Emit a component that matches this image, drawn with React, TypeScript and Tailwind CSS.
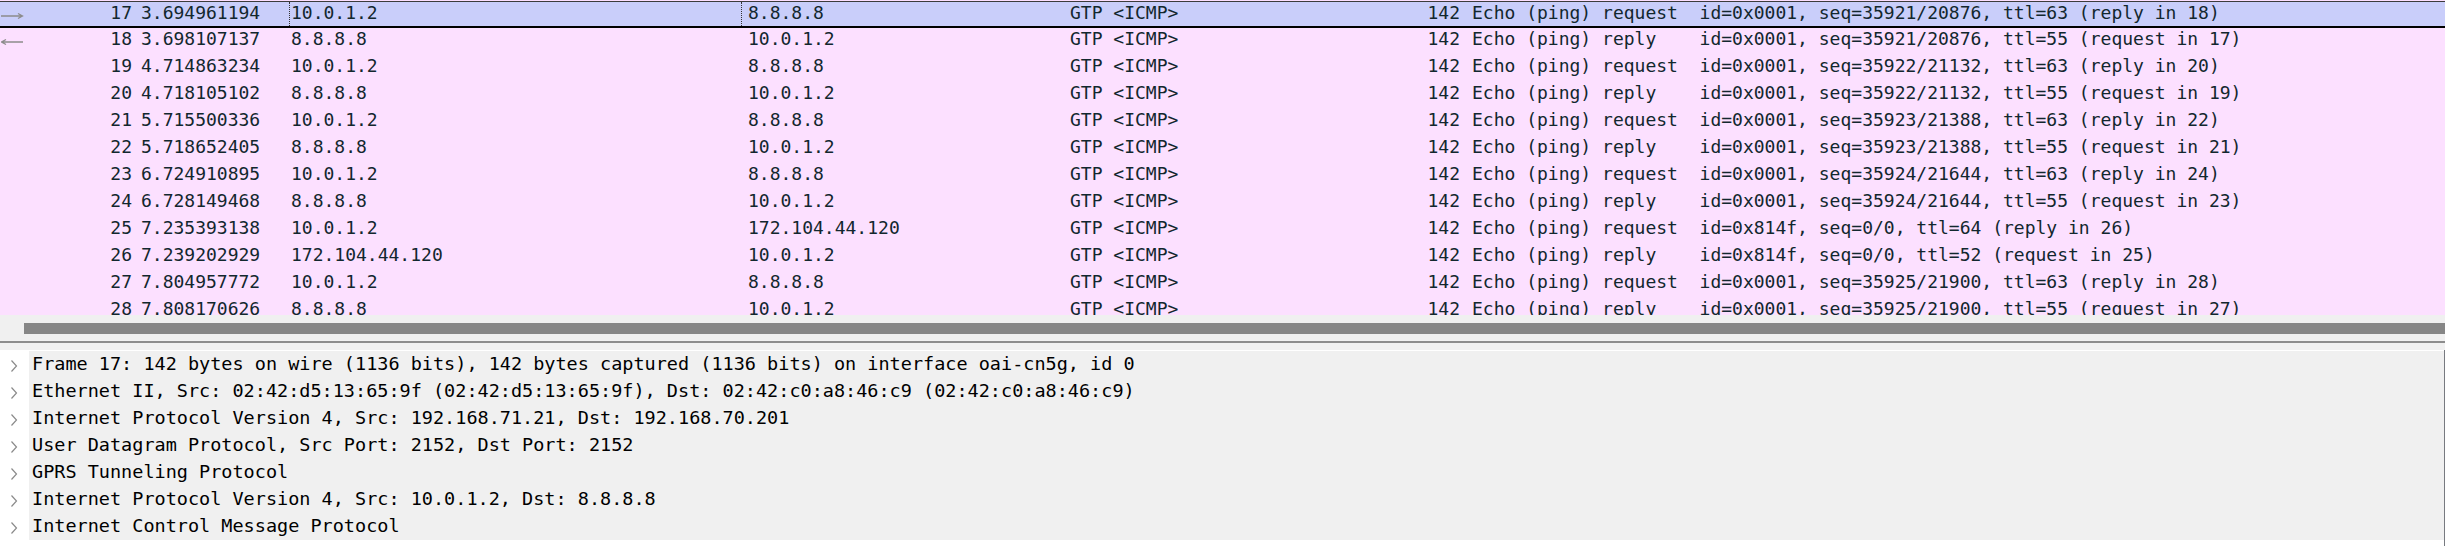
import clsx from "clsx";

type Packet = {
  no: number;
  time: string;
  src: string;
  dst: string;
  kind: "request" | "reply";
  id: string;
  seq: string;
  ttl: number;
  link: number;
};

const packets: Packet[] = [
  { no: 17, time: "3.694961194", src: "10.0.1.2", dst: "8.8.8.8", kind: "request", id: "0x0001", seq: "35921/20876", ttl: 63, link: 18 },
  { no: 18, time: "3.698107137", src: "8.8.8.8", dst: "10.0.1.2", kind: "reply", id: "0x0001", seq: "35921/20876", ttl: 55, link: 17 },
  { no: 19, time: "4.714863234", src: "10.0.1.2", dst: "8.8.8.8", kind: "request", id: "0x0001", seq: "35922/21132", ttl: 63, link: 20 },
  { no: 20, time: "4.718105102", src: "8.8.8.8", dst: "10.0.1.2", kind: "reply", id: "0x0001", seq: "35922/21132", ttl: 55, link: 19 },
  { no: 21, time: "5.715500336", src: "10.0.1.2", dst: "8.8.8.8", kind: "request", id: "0x0001", seq: "35923/21388", ttl: 63, link: 22 },
  { no: 22, time: "5.718652405", src: "8.8.8.8", dst: "10.0.1.2", kind: "reply", id: "0x0001", seq: "35923/21388", ttl: 55, link: 21 },
  { no: 23, time: "6.724910895", src: "10.0.1.2", dst: "8.8.8.8", kind: "request", id: "0x0001", seq: "35924/21644", ttl: 63, link: 24 },
  { no: 24, time: "6.728149468", src: "8.8.8.8", dst: "10.0.1.2", kind: "reply", id: "0x0001", seq: "35924/21644", ttl: 55, link: 23 },
  { no: 25, time: "7.235393138", src: "10.0.1.2", dst: "172.104.44.120", kind: "request", id: "0x814f", seq: "0/0", ttl: 64, link: 26 },
  { no: 26, time: "7.239202929", src: "172.104.44.120", dst: "10.0.1.2", kind: "reply", id: "0x814f", seq: "0/0", ttl: 52, link: 25 },
  { no: 27, time: "7.804957772", src: "10.0.1.2", dst: "8.8.8.8", kind: "request", id: "0x0001", seq: "35925/21900", ttl: 63, link: 28 },
  { no: 28, time: "7.808170626", src: "8.8.8.8", dst: "10.0.1.2", kind: "reply", id: "0x0001", seq: "35925/21900", ttl: 55, link: 27 },
];

const details = [
  "Frame 17: 142 bytes on wire (1136 bits), 142 bytes captured (1136 bits) on interface oai-cn5g, id 0",
  "Ethernet II, Src: 02:42:d5:13:65:9f (02:42:d5:13:65:9f), Dst: 02:42:c0:a8:46:c9 (02:42:c0:a8:46:c9)",
  "Internet Protocol Version 4, Src: 192.168.71.21, Dst: 192.168.70.201",
  "User Datagram Protocol, Src Port: 2152, Dst Port: 2152",
  "GPRS Tunneling Protocol",
  "Internet Protocol Version 4, Src: 10.0.1.2, Dst: 8.8.8.8",
  "Internet Control Message Protocol",
];

const infoText = (p: Packet) => {
  const head = p.kind === "request" ? "Echo (ping) request " : "Echo (ping) reply   ";
  const tail = p.kind === "request" ? `(reply in ${p.link})` : `(request in ${p.link})`;
  return `${head} id=${p.id}, seq=${p.seq}, ttl=${p.ttl} ${tail}`;
};

const Arrow = ({ dir }: { dir: "right" | "left" }) => (
  <svg width="23" height="8" viewBox="0 0 23 8" className="mt-[10px]">
    {dir === "right" ? (
      <path d="M0 4H21M17 1.5L21.5 4L17 6.5" stroke="#8c8c8c" strokeWidth="1.3" fill="none" />
    ) : (
      <path d="M1 4H22M5 1.5L0.5 4L5 6.5" stroke="#8c8c8c" strokeWidth="1.3" fill="none" />
    )}
  </svg>
);

const Chevron = () => (
  <svg width="8" height="14" viewBox="0 0 8 14" className="mt-[8px]">
    <path d="M1.5 1.5L6.5 7L1.5 12.5" stroke="#8a8a8a" strokeWidth="1.2" fill="none" />
  </svg>
);

const PacketRow = ({ p, selected }: { p: Packet; selected: boolean }) => (
  <div
    className={clsx(
      "flex h-[27px] shrink-0 whitespace-pre leading-[21px] text-[#12272e]",
      selected && "border-t border-b-2 border-t-[#3c3c3c] border-b-black bg-[#c9cefa]"
    )}
  >
    <div className="flex w-[138px] shrink-0 items-start justify-between pl-[1px] pr-[6px]">
      {p.no === 17 ? <Arrow dir="right" /> : p.no === 18 ? <Arrow dir="left" /> : <span />}
      <span>{p.no}</span>
    </div>
    <div className="w-[151px] shrink-0 pl-[3px]">{p.time}</div>
    <div
      className={clsx(
        "w-[453px] shrink-0",
        selected ? "border-x border-dotted border-[#333] pl-[1px]" : "pl-[2px]"
      )}
    >
      {p.src}
    </div>
    <div className="w-[322px] shrink-0 pl-[6px]">{p.dst}</div>
    <div className="w-[336px] shrink-0 pl-[6px]">GTP &lt;ICMP&gt;</div>
    <div className="w-[66px] shrink-0 pr-[6px] text-right">142</div>
    <div className="flex-1 pl-[6px]">{infoText(p)}</div>
  </div>
);

export default function App() {
  return (
    <div className="flex h-[546px] w-[2445px] flex-col overflow-hidden bg-white font-['DejaVu_Sans_Mono','Liberation_Mono',monospace] text-[18px]">
      {/* packet list */}
      <div className="flex h-[315px] shrink-0 flex-col overflow-hidden bg-[#fce0ff] pt-[1px]">
        {packets.map((p) => (
          <PacketRow key={p.no} p={p} selected={p.no === 17} />
        ))}
      </div>

      {/* horizontal scrollbar + splitter */}
      <div className="h-[26px] shrink-0 bg-[#f0f0f0] pl-[24px] pt-[8px]">
        <div className="h-[11px] bg-[#868686]" />
      </div>
      <div className="h-[2px] shrink-0 bg-[#8c8c8c]" />
      <div className="h-[7px] shrink-0 bg-[#f0f0f0]" />

      {/* packet details */}
      <div className="flex flex-1 flex-col border-r border-[#777a80] pt-[1px]">
        {details.map((d) => (
          <div key={d} className="flex h-[27px] shrink-0">
            <div className="w-[29px] shrink-0 pl-[10px]">
              <Chevron />
            </div>
            <div className="flex-1 whitespace-pre bg-[#f0f0f0] pl-[3px] text-[18.5px] leading-[25px] text-black">
              {d}
            </div>
          </div>
        ))}
      </div>
    </div>
  );
}
